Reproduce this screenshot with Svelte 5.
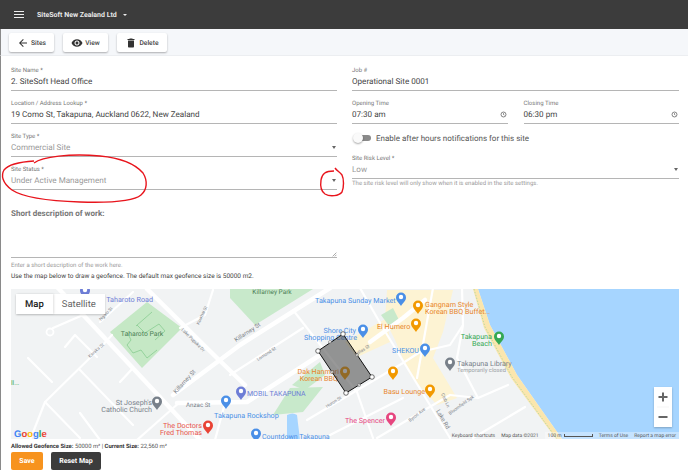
<script>
  // map coordinates below are page pixels, the svg viewBox starts at the map's corner
  const mainRoads = [
    [[58,288],[200,440]],
    [[173,395],[240,345],[330,288]],
    [[147,289],[217,358],[245,385]],
    [[177,403],[247,402],[320,355]],
    [[370,342],[403,318],[425,300]]
  ];
  const sideRoads = [
    [[213,290],[205,315],[180,328]],
    [[133,292],[100,322]],
    [[30,440],[45,402],[100,348],[112,335]],
    [[28,358],[52,382]],
    [[65,347],[75,335],[97,357]],
    [[45,402],[80,438]],
    [[80,370],[133,425]],
    [[80,413],[100,440]],
    [[120,382],[133,368]],
    [[53,328],[83,315]],
    [[137,440],[180,402]],
    [[230,375],[303,328]],
    [[307,420],[403,363],[420,352]],
    [[293,310],[357,392],[373,438]],
    [[360,288],[383,328],[450,438]],
    [[433,288],[417,378]],
    [[462,288],[463,325],[457,358],[478,398],[508,385]],
    [[463,325],[450,345],[420,352]],
    [[473,438],[525,407]],
    [[377,438],[450,395]],
    [[330,435],[403,398]],
    [[215,440],[225,403]],
    [[450,395],[478,398]]
  ];

  const roadPath = (pts) => 'M' + pts.map((p) => p.join(' ')).join('L');

  const labels = [
    { x: 153, y: 302, t: 'll Taharoto Road', c: '#6d7dd6', s: 7.2, a: 'end' },
    { x: 142, y: 336, t: 'Taharoto Park', c: '#4a7d54', s: 6.8, a: 'middle' },
    { x: 11, y: 385, t: 'll...', c: '#34a853', s: 6.5, a: 'start' },
    { x: 152, y: 405, t: "St Joseph's", c: '#78808a', s: 7.2, a: 'end' },
    { x: 152, y: 411.5, t: 'Catholic Church', c: '#78808a', s: 7.2, a: 'end' },
    { x: 202, y: 428, t: 'The Doctors', c: '#e8544a', s: 7.2, a: 'end' },
    { x: 202, y: 435, t: 'Fred Thomas', c: '#e8544a', s: 7.2, a: 'end' },
    { x: 186, y: 406.5, t: 'Anzac St', c: '#78808a', s: 6.2, a: 'start' },
    { x: 214, y: 418, t: 'Takapuna Rockshop', c: '#4a8fe7', s: 7.2, a: 'start' },
    { x: 247, y: 396, t: 'MOBIL TAKAPUNA', c: '#6d7dd6', s: 7, a: 'start' },
    { x: 272, y: 293.5, t: 'Killarney Park', c: '#4a7d54', s: 6.5, a: 'middle' },
    { x: 315, y: 303, t: 'Takapuna Sunday Market', c: '#4a8fe7', s: 7.2, a: 'start' },
    { x: 356, y: 332.5, t: 'Shore City', c: '#4a8fe7', s: 7.2, a: 'end' },
    { x: 357, y: 340, t: 'Shopping Centre', c: '#4a8fe7', s: 7.2, a: 'end' },
    { x: 339, y: 374, t: 'Dak Hanmari', c: '#e8852a', s: 7.2, a: 'end' },
    { x: 338, y: 381, t: 'Korean BBQ', c: '#e8852a', s: 7.2, a: 'end' },
    { x: 425, y: 307, t: 'Gangnam Style', c: '#e8852a', s: 7.2, a: 'start' },
    { x: 425, y: 314, t: 'Korean BBQ Buffet...', c: '#e8852a', s: 7.2, a: 'start' },
    { x: 377, y: 329, t: 'El Humero', c: '#e8852a', s: 7.2, a: 'start' },
    { x: 392, y: 353, t: 'SHEKOU', c: '#4a8fe7', s: 7, a: 'start' },
    { x: 383.5, y: 394, t: 'Basu Lounge', c: '#e8852a', s: 7.2, a: 'start' },
    { x: 345, y: 423, t: 'The Spencer', c: '#e6467f', s: 7.2, a: 'start' },
    { x: 262, y: 438.5, t: 'Countdown Takapuna', c: '#4a8fe7', s: 7, a: 'start' },
    { x: 492, y: 339, t: 'Takapuna', c: '#34a853', s: 7.2, a: 'end' },
    { x: 492, y: 346, t: 'Beach', c: '#34a853', s: 7.2, a: 'end' },
    { x: 457, y: 366, t: 'Takapuna Library', c: '#78808a', s: 7.2, a: 'start' },
    { x: 457, y: 371.5, t: 'Temporarily closed', c: '#9aa0a6', s: 5.8, a: 'start' }
  ];

  const streets = [
    { x: 101, y: 321, r: -46, t: 'Ngaio St' },
    { x: 90, y: 358, r: -42, t: 'Karaka St' },
    { x: 199, y: 325, r: -65, t: 'Kowhai St' },
    { x: 181, y: 330, r: 45, t: 'Lake Pupuke Dr' },
    { x: 176, y: 394, r: -48, t: 'Killarney St', big: true },
    { x: 236, y: 342, r: -33, t: 'Killarney St', big: true },
    { x: 258, y: 361, r: -33, t: 'Lomond St' },
    { x: 327, y: 408, r: -32, t: 'Huron St' },
    { x: 356, y: 356, r: -33, t: 'Hillas St' },
    { x: 410, y: 422, r: -38, t: 'Byron Ave' },
    { x: 436, y: 411, r: 60, t: 'Lake Rd', big: true },
    { x: 450, y: 415, r: -36, t: 'Bloomfield Spk' },
    { x: 441, y: 394, r: 65, t: 'Club Ln' }
  ];

  const pins = [
    { x: 85, y: 292, c: '#6d7dd6' },
    { x: 401, y: 299, c: '#4a8fe7' },
    { x: 363, y: 331, c: '#4a8fe7' },
    { x: 418, y: 307, c: '#f29900' },
    { x: 416, y: 325, c: '#f29900' },
    { x: 425, y: 350, c: '#4a8fe7' },
    { x: 345, y: 373, c: '#f29900' },
    { x: 393, y: 373, c: '#f29900' },
    { x: 430, y: 391, c: '#f29900' },
    { x: 391, y: 419, c: '#e6467f' },
    { x: 241, y: 393, c: '#6d7dd6' },
    { x: 226, y: 402, c: '#4a8fe7' },
    { x: 256, y: 435, c: '#4a8fe7' },
    { x: 208, y: 427, c: '#e94335' },
    { x: 157, y: 403, c: '#78808a' },
    { x: 450, y: 364, c: '#78808a' },
    { x: 499, y: 338, c: '#34a853' }
  ];

  const handles = [[343,334],[318,351],[346,393],[372,377]];
  const midHandles = [[330,342],[332,372],[359,385],[357,355]];
</script>

<div class="page">
  <header class="topbar">
    <span class="menu"><i></i><i></i><i></i></span>
    <span class="company">SiteSoft New Zealand Ltd</span>
    <span class="caret"></span>
  </header>

  <nav class="toolbar">
    <button class="tool sites">
      <svg viewBox="0 0 24 24"><path d="M20 11H7.830l5.590-5.590L12 4l-8 8 8 8 1.410-1.410L7.830 13H20v-2z"/></svg>
      Sites
    </button>
    <button class="tool view">
      <svg viewBox="0 0 24 24"><path d="M12 4.500C7 4.500 2.730 7.610 1 12c1.730 4.390 6 7.500 11 7.500s9.270-3.110 11-7.500c-1.730-4.390-6-7.500-11-7.500zM12 17c-2.760 0-5-2.240-5-5s2.240-5 5-5 5 2.240 5 5-2.240 5-5 5zm0-8c-1.660 0-3 1.340-3 3s1.340 3 3 3 3-1.340 3-3-1.340-3-3-3z"/></svg>
      View
    </button>
    <button class="tool delete">
      <svg viewBox="0 0 24 24"><path d="M6 19c0 1.100.9 2 2 2h8c1.100 0 2-.9 2-2V7H6v12zM19 4h-3.500l-1-1h-5l-1 1H5v2h14V4z"/></svg>
      Delete
    </button>
  </nav>

  <main class="content">
    <div class="columns">
      <div class="col">
        <div class="field"><span class="label">Site Name *</span><span class="value">2. SiteSoft Head Office</span></div>
        <div class="field"><span class="label">Location / Address Lookup *</span><span class="value">19 Como St, Takapuna, Auckland 0622, New Zealand</span></div>
        <div class="field"><span class="label">Site Type *</span><span class="value muted">Commercial Site</span><span class="arrow"></span></div>
        <div class="field"><span class="label">Site Status *</span><span class="value muted">Under Active Management</span><span class="arrow"></span></div>
      </div>
      <div class="col">
        <div class="field"><span class="label">Job #</span><span class="value">Operational Site 0001</span></div>
        <div class="times">
          <div class="field">
            <span class="label">Opening Time</span><span class="value">07:30 am</span>
            <svg class="clock" viewBox="0 0 24 24"><circle cx="12" cy="12" r="8.500"/><path d="M12 7.500V12l3 2"/></svg>
          </div>
          <div class="field">
            <span class="label">Closing Time</span><span class="value">06:30 pm</span>
            <svg class="clock" viewBox="0 0 24 24"><circle cx="12" cy="12" r="8.500"/><path d="M12 7.500V12l3 2"/></svg>
          </div>
        </div>
        <div class="switch-row">
          <span class="switch"><span class="knob"></span></span>
          <span>Enable after hours notifications for this site</span>
        </div>
        <div class="field"><span class="label">Site Risk Level *</span><span class="value muted">Low</span><span class="arrow"></span></div>
        <p class="helper">The site risk level will only show when it is enabled in the site settings.</p>
      </div>
    </div>

    <section class="desc">
      <h3>Short description of work:</h3>
      <div class="textarea">
        <svg class="grip" viewBox="0 0 8 8"><path d="M1 7l6-6M4.500 7L7 4.500"/></svg>
      </div>
      <p class="helper">Enter a short description of the work here.</p>
      <p class="hint">Use the map below to draw a geofence. The default max geofence size is 50000 m2.</p>
    </section>

    <div class="map">
      <svg class="map-canvas" viewBox="11 289 668 150">
        <rect x="11" y="289" width="668" height="150" fill="#f1f3f4"/>
        <polygon points="387,290 453,290 443,332 433,358 457,398 437,405 410,375 395,340 385,320" fill="#fdf3d3"/>
        <polygon points="345,342 387,318 390,342 357,357" fill="#fdf3d3"/>
        <polygon points="230,289 313,289 255,325 230,298" fill="#c8e9cb"/>
        <polygon points="110,332 147,302 182,328 142,368" fill="#c5e8c5"/>
        <polygon points="273,415 290,388 323,387 303,412" fill="#c8e9cb"/>
        <polygon points="292,385 320,362 325,375 305,390" fill="#c8e9cb"/>
        <polygon points="381,315 393,308 400,322 392,330" fill="#c8e9cb"/>
        <path d="M287 415q6-3 10 0l3 25h-13z" fill="#a6d5ff"/>
        <polygon points="478,289 679,289 679,439 562,439 517,375 490,325" fill="#a6d5ff"/>
        <polygon points="473,289 478,289 490,325 517,375 562,439 556,439 511,378 484,328" fill="#fbe6ad"/>
        <path d="M474 289l11 38 27 50 45 62" fill="none" stroke="#8fd0a0" stroke-width=".6" stroke-dasharray="1.500 1.500"/>
        <g fill="none" stroke="#fff" stroke-linecap="round" stroke-linejoin="round">
          {#each mainRoads as r}
            <path d={roadPath(r)} stroke-width="4.500"/>
          {/each}
          {#each sideRoads as r}
            <path d={roadPath(r)} stroke-width="2.200"/>
          {/each}
          <circle cx="50" cy="332" r="3.500" stroke-width="1.800"/>
        </g>
        <path d="M127 332l4 8 -4 5 6 8 8-3 6 8 10-8M137 325l8 8 14-9 6 7 -10 9M152 312l-16 14" fill="none" stroke="#7fc98a" stroke-width=".7"/>

        {#each streets as s}
          <text
            class="street"
            class:big={s.big}
            transform="translate({s.x} {s.y}) rotate({s.r})"
          >{s.t}</text>
        {/each}

        {#each pins as p}
          <path
            d="M{p.x} {p.y + 7}c-1.500-3-5-5-5-8.500a5 5 0 0 1 10 0c0 3.500-3.500 5.500-5 8.500z"
            fill={p.c}
          />
          <circle cx={p.x} cy={p.y - 2} r="2.200" fill="#fff"/>
        {/each}

        {#each labels as l}
          <text x={l.x} y={l.y} fill={l.c} font-size={l.s} text-anchor={l.a}>{l.t}</text>
        {/each}

        <polygon points="343,334 318,351 346,393 372,377" fill="#444" fill-opacity=".55" stroke="#111" stroke-width="1"/>
        {#each midHandles as h}
          <circle cx={h[0]} cy={h[1]} r="1.500" fill="#fff" fill-opacity=".7" stroke="#555" stroke-width=".5"/>
        {/each}
        {#each handles as h}
          <circle cx={h[0]} cy={h[1]} r="2.300" fill="#fff" stroke="#333" stroke-width=".7"/>
        {/each}

        <text x="14" y="436.500" class="google">
          <tspan fill="#4285f4">G</tspan><tspan fill="#ea4335">o</tspan><tspan fill="#fbbc05">o</tspan><tspan fill="#4285f4">g</tspan><tspan fill="#34a853">l</tspan><tspan fill="#ea4335">e</tspan>
        </text>
      </svg>

      <div class="map-type">
        <span class="on">Map</span>
        <span>Satellite</span>
      </div>
      <div class="zoom">
        <svg viewBox="0 0 18 40" width="18" height="40">
          <path d="M4.500 10h9M9 5.500v9M4.500 30h9" fill="none" stroke="#666" stroke-width="2"/>
          <path d="M3 20h12" stroke="#eee" stroke-width=".6"/>
        </svg>
      </div>
      <div class="attrib">
        <span>Keyboard shortcuts</span>
        <span>Map data ©2021</span>
        <span class="tinted">
          <span class="scale">100 m <i></i></span>
          <span>Terms of Use</span>
          <span>Report a map error</span>
        </span>
      </div>
    </div>

    <p class="sizes"><b>Allowed Geofence Size:</b> 50000 m² | <b>Current Size:</b> 22,560 m²</p>
    <div class="actions">
      <button class="save">Save</button>
      <button class="reset">Reset Map</button>
    </div>
  </main>

  <svg class="marks" viewBox="0 0 688 470">
    <path d="M34 163C42 157 70 153 100 156C122 158 136 165 143 173C148 181 147 190 141 195C134 201 112 203 80 202C50 201 24 198 12 190C2 183 1 175 4 170C8 165 18 162 34 161"/>
    <path d="M334 171C325 171 322 174 321 180C320 187 322 192 325 194C330 197 339 196 342 192C344 187 344 179 342 175C340 172 337 171 335 168"/>
  </svg>
</div>

<style>
  :global(body) {
    margin: 0;
    font-family: Roboto, "Liberation Sans", sans-serif;
    background: #fff;
    text-rendering: geometricPrecision;
  }
  .page {
    position: relative;
    width: 688px;
    height: 470px;
    overflow: hidden;
    color: #333;
  }
  .topbar {
    display: flex;
    align-items: center;
    height: 29px;
    background: #3c3c3c;
    color: #e8e8e8;
    padding-left: 14px;
  }
  .menu {
    display: flex;
    flex-direction: column;
    gap: 1.500px;
    width: 10px;
    margin-right: 13px;
  }
  .menu i {
    height: 1.200px;
    background: #eee;
  }
  .company {
    font-size: 7px;
    font-weight: 700;
  }
  .caret {
    margin-left: 6px;
    border-left: 2.500px solid transparent;
    border-right: 2.500px solid transparent;
    border-top: 2.500px solid #eee;
  }
  .toolbar {
    display: flex;
    gap: 9px;
    height: 27px;
    box-sizing: border-box;
    padding: 4px 0 0 8px;
    background: #f5f7fa;
    border-bottom: 1px solid #eceef1;
    border-left: 1px solid #8a8a8a;
  }
  .tool {
    display: flex;
    align-items: center;
    justify-content: center;
    gap: 2px;
    height: 19px;
    padding: 0;
    border: 0;
    border-radius: 2px;
    background: #fff;
    color: #444;
    font: 500 6.700px Roboto, sans-serif;
    text-rendering: geometricPrecision;
    box-shadow: 0 1px 2px rgba(0,0,0,.3);
  }
  .sites, .view {
    width: 45px;
  }
  .delete {
    width: 50px;
  }
  .tool svg {
    width: 12px;
    height: 12px;
    fill: #333;
  }
  .content {
    height: 414px;
    padding: 0 9px 0 10px;
    border-left: 1px solid #8a8a8a;
  }
  .columns {
    display: grid;
    grid-template-columns: 326px 327px;
    gap: 15px;
    padding-top: 10px;
  }
  .field {
    position: relative;
    display: flex;
    flex-direction: column;
    height: 33px;
    box-sizing: border-box;
  }
  .label {
    font-size: 6px;
    line-height: 9px;
    color: #777;
  }
  .value {
    font-size: 8.100px;
    line-height: 13px;
    padding-bottom: 2px;
    color: #444;
    border-bottom: 1px solid #b5b5b5;
  }
  .muted {
    color: #999;
  }
  .arrow {
    position: absolute;
    right: 1px;
    top: 14px;
    border-left: 2.500px solid transparent;
    border-right: 2.500px solid transparent;
    border-top: 3px solid #666;
  }
  .times {
    display: grid;
    grid-template-columns: 155.500px 155.500px;
    gap: 16px;
  }
  .clock {
    position: absolute;
    right: 1px;
    top: 12px;
    width: 7px;
    height: 7px;
    fill: none;
    stroke: #555;
    stroke-width: 2.500;
  }
  .switch-row {
    display: flex;
    align-items: center;
    gap: 5px;
    height: 22px;
    margin-top: -5px;
    margin-bottom: 5px;
    font-size: 8px;
    color: #555;
  }
  .switch {
    position: relative;
    width: 17px;
    height: 6px;
    margin-left: 2px;
    border-radius: 3px;
    background: #8a8a8a;
  }
  .knob {
    position: absolute;
    left: -1px;
    top: -2px;
    width: 10px;
    height: 10px;
    border-radius: 50%;
    background: #fafafa;
    box-shadow: 0 1px 2px rgba(0,0,0,.35);
  }
  .helper {
    margin: 0;
    font-size: 6px;
    line-height: 9px;
    color: #999;
  }
  .col .helper {
    margin-top: -8px;
  }
  .desc {
    width: 326px;
    margin-top: 10px;
  }
  .desc h3 {
    margin: 0;
    font-size: 8px;
    line-height: 11px;
    font-weight: 700;
    color: #777;
  }
  .textarea {
    position: relative;
    height: 38px;
    border-bottom: 1px solid #b5b5b5;
    margin-bottom: 3px;
  }
  .grip {
    position: absolute;
    right: 0;
    bottom: 0;
    width: 5px;
    height: 5px;
    fill: none;
    stroke: #777;
    stroke-width: 1;
  }
  .hint {
    margin: 1px 0 0;
    font-size: 6.500px;
    line-height: 10px;
    color: #444;
    white-space: nowrap;
  }
  .map {
    position: relative;
    width: 668px;
    height: 150px;
    margin-top: 8px;
  }
  .map-canvas {
    display: block;
    width: 668px;
    height: 150px;
    font-family: Roboto, sans-serif;
  }
  .street {
    font-size: 4.500px;
    fill: #7c8288;
  }
  .big {
    font-size: 6px;
  }
  .google {
    font: 700 9.500px "Liberation Sans", sans-serif;
  }
  .map-type {
    position: absolute;
    left: 5px;
    top: 5px;
    display: flex;
    height: 20px;
    background: #fff;
    font-size: 9.500px;
    box-shadow: 0 1px 2px rgba(0,0,0,.2);
  }
  .map-type span {
    display: flex;
    align-items: center;
    padding: 0 9px;
    color: #666;
  }
  .map-type .on {
    color: #222;
    font-weight: 500;
    box-shadow: 1px 0 2px rgba(0,0,0,.12);
  }
  .zoom {
    position: absolute;
    right: 7px;
    top: 98px;
    width: 18px;
    height: 40px;
    background: #fff;
    box-shadow: 0 1px 2px rgba(0,0,0,.25);
  }
  .zoom svg {
    display: block;
  }
  .attrib {
    position: absolute;
    right: 0;
    bottom: 0;
    display: flex;
    align-items: center;
    gap: 6px;
    height: 7px;
    font-size: 5px;
    color: #555;
    white-space: nowrap;
  }
  .tinted {
    display: flex;
    align-items: center;
    gap: 6px;
    height: 7px;
    padding: 0 3px;
    background: rgba(255,255,255,.35);
  }
  .scale {
    display: flex;
    align-items: center;
    gap: 2px;
  }
  .scale i {
    width: 27px;
    height: 2px;
    border: solid #555;
    border-width: 0 1px 1px;
  }
  .sizes {
    margin: 4px 0 0;
    font-size: 5.900px;
    line-height: 9px;
    color: #555;
  }
  .sizes b {
    color: #333;
  }
  .actions {
    display: flex;
    gap: 8px;
    margin-top: 0;
  }
  .actions button {
    height: 18px;
    border: 0;
    border-radius: 2px;
    font: 700 7px Roboto, sans-serif;
    text-rendering: geometricPrecision;
    color: #fff;
  }
  .save {
    width: 32px;
    background: #f7931e;
  }
  .reset {
    width: 50px;
    background: #3c3c3c;
  }
  .marks {
    position: absolute;
    inset: 0;
    width: 688px;
    height: 470px;
    fill: none;
    stroke: #e8141c;
    stroke-width: 1.400;
    pointer-events: none;
  }
</style>
